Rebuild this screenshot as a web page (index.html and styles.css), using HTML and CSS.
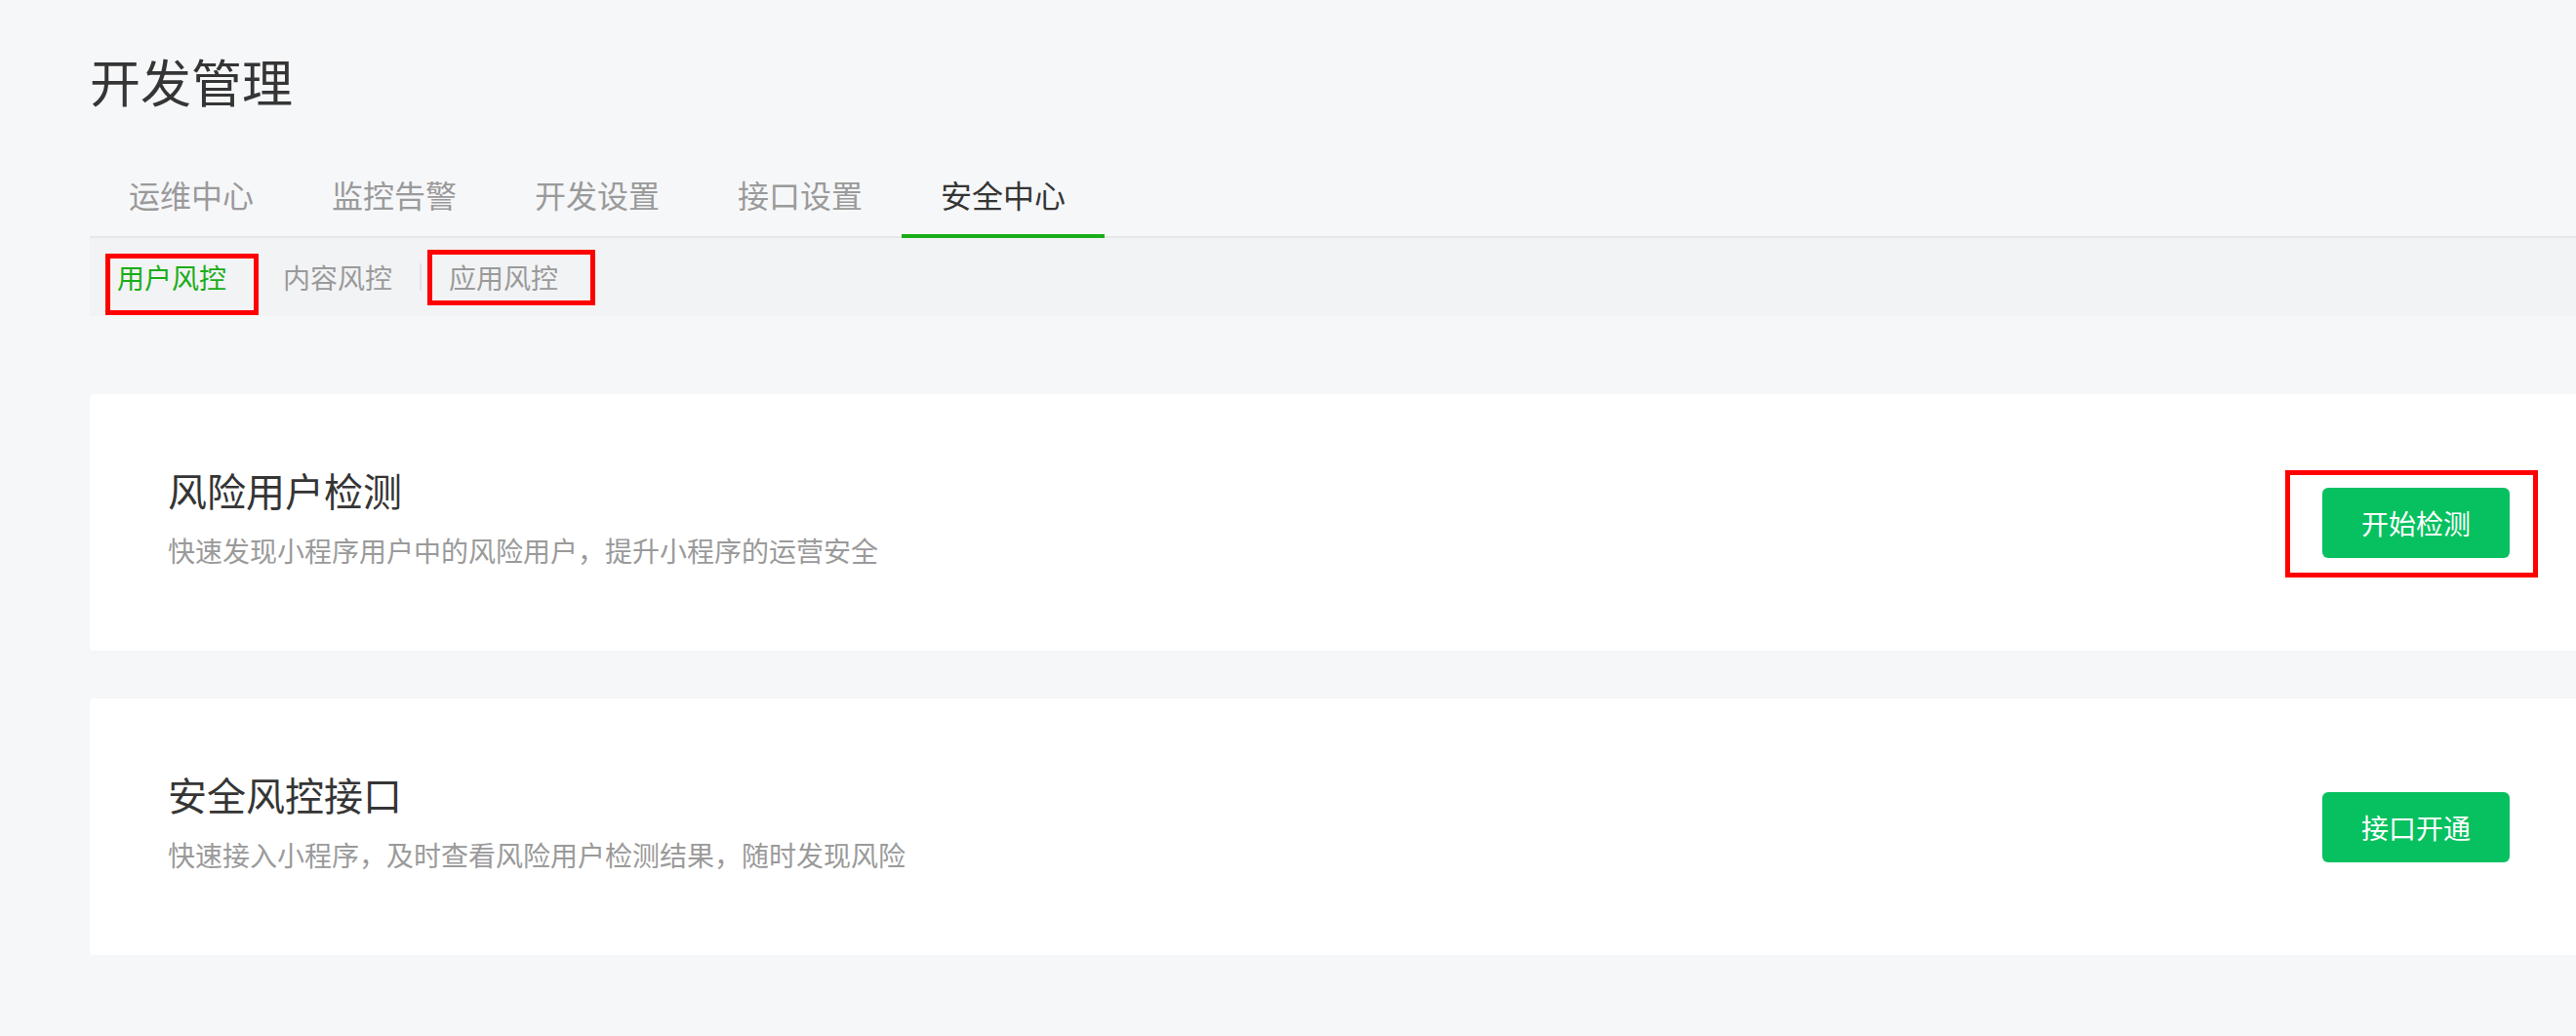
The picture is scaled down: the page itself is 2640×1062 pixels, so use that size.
FILE: index.html
```html
<!DOCTYPE html>
<html lang="zh-CN">
<head>
<meta charset="utf-8">
<title>开发管理</title>
<link rel="stylesheet" href="styles.css">
</head>
<body>
<div class="page">
  <h1 class="title">开发管理</h1>
  <nav class="tabs">
    <div class="tab">运维中心</div>
    <div class="tab">监控告警</div>
    <div class="tab">开发设置</div>
    <div class="tab">接口设置</div>
    <div class="tab active">安全中心</div>
  </nav>
  <div class="subnav">
    <div class="subnav-item active">用户风控</div>
    <span class="sep"></span>
    <div class="subnav-item">内容风控</div>
    <span class="sep"></span>
    <div class="subnav-item">应用风控</div>
    <span class="mark mark-user"></span>
    <span class="mark mark-app"></span>
  </div>
  <div class="cards">
    <section class="card">
      <div class="card-text">
        <h2 class="card-title">风险用户检测</h2>
        <p class="card-desc">快速发现小程序用户中的风险用户，提升小程序的运营安全</p>
      </div>
      <div class="btn-wrap">
        <button class="btn">开始检测</button>
        <span class="mark mark-btn"></span>
      </div>
    </section>
    <section class="card">
      <div class="card-text">
        <h2 class="card-title">安全风控接口</h2>
        <p class="card-desc">快速接入小程序，及时查看风险用户检测结果，随时发现风险</p>
      </div>
      <div class="btn-wrap">
        <button class="btn">接口开通</button>
      </div>
    </section>
  </div>
</div>
</body>
</html>
```

FILE: styles.css
```css
html, body {
  margin: 0;
  padding: 0;
}

body {
  background: #f6f7f9;
  font-family: "Noto Sans CJK SC", "Noto Sans", sans-serif;
  color: #353535;
  overflow-x: hidden;
}

.page {
  padding: 47px 0 0 92px;
}

.title {
  margin: 0 0 56px;
  font-size: 52px;
  line-height: 72px;
  font-weight: normal;
  color: #353535;
}

.tabs {
  display: flex;
  border-bottom: 2px solid #e7e7e7;
}

.tab {
  padding: 0 40px 17px;
  margin-bottom: -2px;
  border-bottom: 4px solid transparent;
  font-size: 32px;
  line-height: 48px;
  color: #9a9a9a;
}

.tab.active {
  color: #353535;
  border-bottom-color: #1aad19;
}

.subnav {
  position: relative;
  display: flex;
  align-items: center;
  height: 80px;
  background: #f2f3f5;
}

.subnav-item {
  padding: 0 28px;
  font-size: 28px;
  line-height: 40px;
  color: #9a9a9a;
}

.subnav-item.active {
  color: #1aad19;
}

.sep {
  width: 2px;
  height: 28px;
  background: #e3e4e6;
}

.mark {
  position: absolute;
  box-sizing: border-box;
  border: 5px solid #ff0000;
  pointer-events: none;
}

.mark-user {
  left: 16px;
  top: 16px;
  width: 157px;
  height: 63px;
}

.mark-app {
  left: 346px;
  top: 12px;
  width: 172px;
  height: 57px;
}

.cards {
  padding-top: 80px;
}

.card {
  display: flex;
  align-items: center;
  justify-content: space-between;
  padding: 70px 68px 70px 80px;
  margin-bottom: 49px;
  background: #ffffff;
  border-radius: 4px 0 0 4px;
  box-shadow: 0 0 6px rgba(0, 0, 0, 0.015);
}

.card-text {
  padding-bottom: 13px;
}

.card-title {
  margin: 0;
  font-size: 40px;
  line-height: 56px;
  font-weight: normal;
  color: #353535;
}

.card-desc {
  margin: 14px 0 0;
  font-size: 28px;
  line-height: 40px;
  color: #9a9a9a;
}

.btn-wrap {
  position: relative;
  display: flex;
}

.btn {
  width: 192px;
  height: 72px;
  padding: 0;
  border: none;
  border-radius: 6px;
  background: #07c160;
  color: #ffffff;
  font-family: inherit;
  font-size: 28px;
  line-height: 72px;
}

.mark-btn {
  top: -18px;
  left: -38px;
  right: -29px;
  bottom: -20px;
}
```
